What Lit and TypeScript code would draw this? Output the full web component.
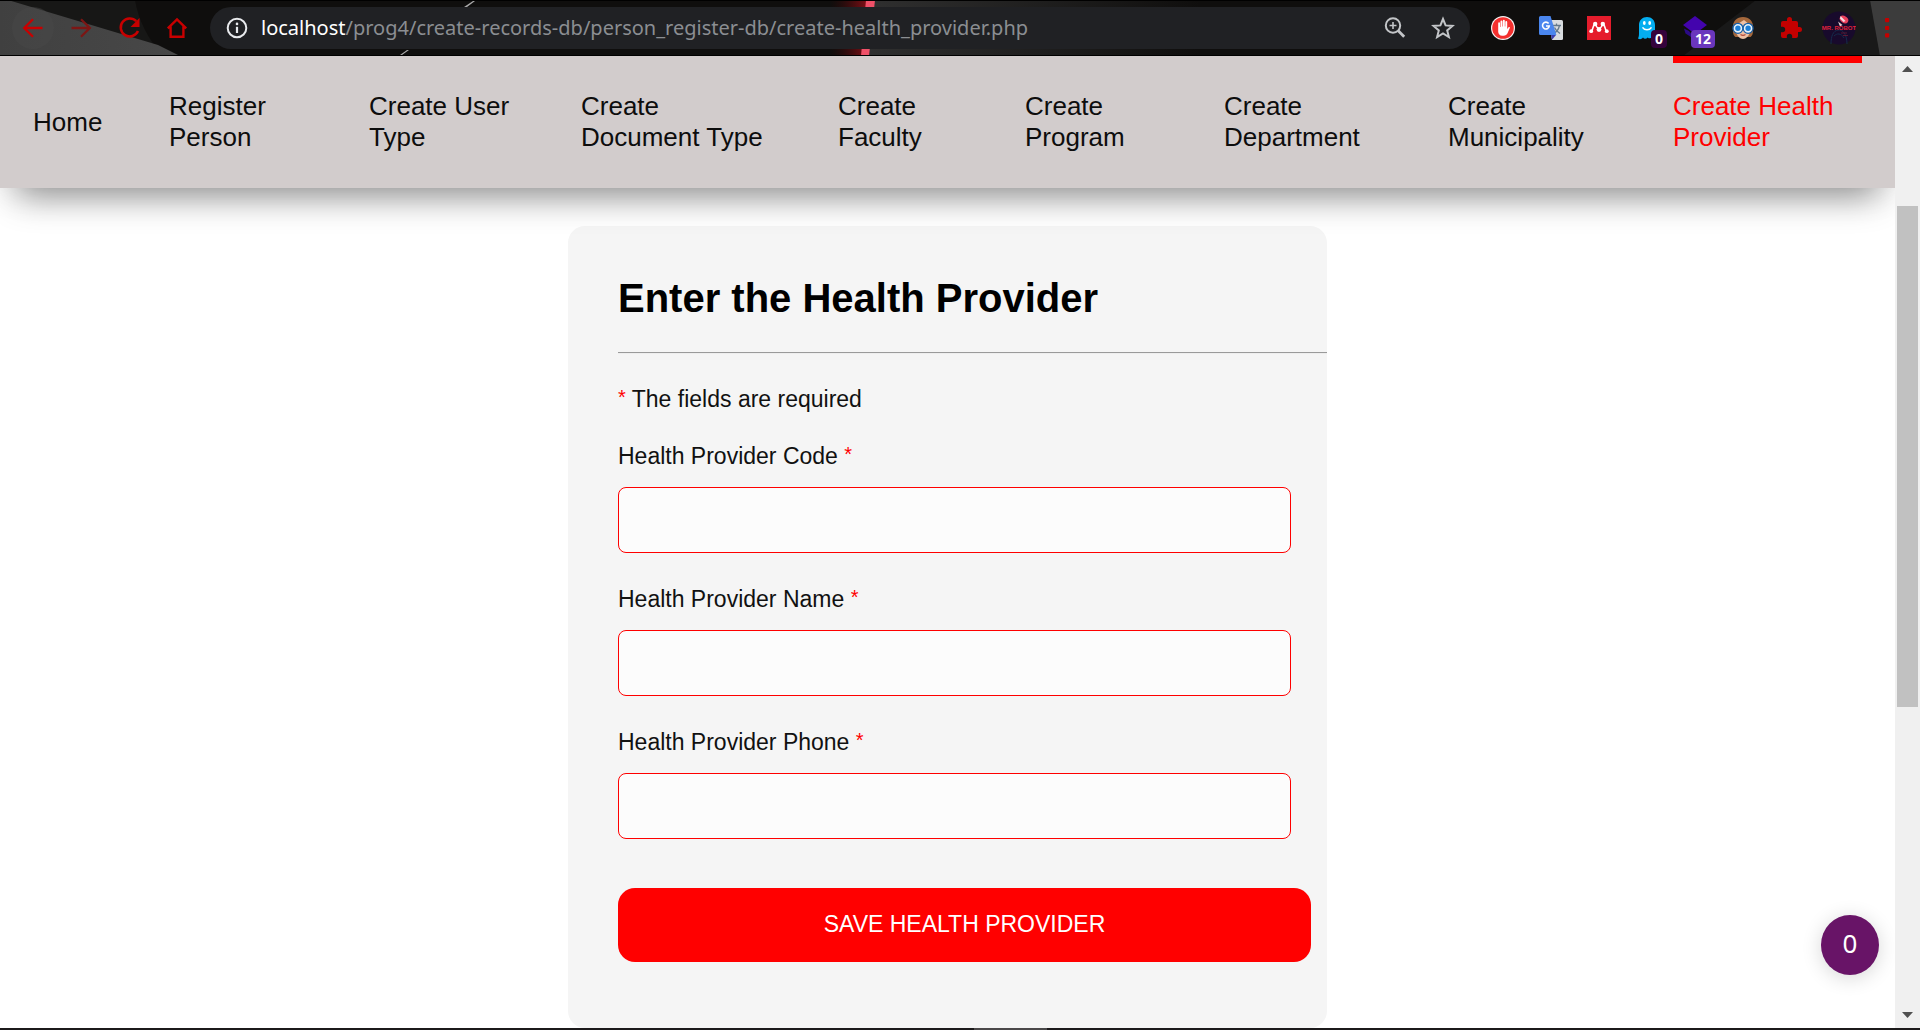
import { LitElement, html, css, svg } from "lit";
import { customElement } from "lit/decorators.js";

const backIcon = html`<svg class="icon" viewBox="0 0 24 24" aria-hidden="true"><path d="M21.5 12H3.5M12 3.2L3.2 12l8.800 8.800" fill="none" stroke="currentColor" stroke-width="2.300"/></svg>`;
const forwardIcon = html`<svg class="icon" viewBox="0 0 24 24" aria-hidden="true"><path d="M2.500 12h18M12 3.200l8.800 8.800-8.800 8.800" fill="none" stroke="currentColor" stroke-width="2.300"/></svg>`;
const reloadIcon = html`<svg class="icon" viewBox="0 0 24 24" aria-hidden="true"><path d="M19.300 5.200A9 9 0 1 0 21 15" fill="none" stroke="currentColor" stroke-width="2.500"/><path d="M22.500 2v9h-9z" fill="currentColor"/></svg>`;
const homeIcon = html`<svg class="icon" viewBox="0 0 24 24" aria-hidden="true"><path d="M2.800 12.300L12 3.400l9.200 8.900M5.600 10.500v10.300h12.800V10.500" fill="none" stroke="currentColor" stroke-width="2.400"/></svg>`;
const infoIcon = html`<svg class="icon" viewBox="0 0 24 24" aria-hidden="true"><circle cx="12" cy="12" r="9.300" fill="none" stroke="currentColor" stroke-width="2"/><path d="M12 10.800v6.200" stroke="currentColor" stroke-width="2.200"/><circle cx="12" cy="7.900" r="1.300" fill="currentColor"/></svg>`;
const zoomIcon = html`<svg class="icon" viewBox="0 0 24 24" aria-hidden="true"><circle cx="10" cy="9.500" r="7.200" fill="none" stroke="currentColor" stroke-width="2"/><path d="M6.500 9.500h7M10 6v7" stroke="currentColor" stroke-width="1.600"/><path d="M15 14.500l6.200 6.200" stroke="currentColor" stroke-width="2.800"/></svg>`;
const starIcon = html`<svg class="icon" viewBox="0 0 24 24" aria-hidden="true"><path d="M12 3l2.600 6.400 6.900.500-5.300 4.500 1.700 6.700L12 17.400l-5.900 3.700 1.700-6.700-5.300-4.500 6.900-.500z" fill="none" stroke="currentColor" stroke-width="2"/></svg>`;

const handIcon = html`<svg class="icon" viewBox="0 0 24 24" aria-hidden="true"><circle cx="12" cy="12" r="12" fill="#f5f1f1"/><circle cx="12" cy="12" r="10.800" fill="#f4302e"/><path d="M7.200 11.500V7.200a.9.900 0 0 1 1.800 0V11h.500V5.400a.95.950 0 0 1 1.900 0V10.500h.500V4.700a.95.950 0 0 1 1.900 0v5.800h.500V5.900a.95.950 0 0 1 1.900 0v7.300l1-1.700c.7-1 2.100-.6 1.600.6l-2.300 5.200c-.7 1.600-2 2.500-3.800 2.500h-1.500c-2.400 0-4-1.700-4-4z" fill="#fff"/></svg>`;
const translateIcon = html`<svg class="icon" viewBox="0 0 24 24" aria-hidden="true">
  <path d="M9 4h13.500A1.500 1.500 0 0 1 24 5.500v17a1.500 1.500 0 0 1-1.500 1.500H13z" fill="#d9dcdf"/>
  <path d="M13.500 9.500h8.500M17.500 7.500v2M20.500 9.500c-.8 3.500-3 6.500-6 8M15.500 11.500c1 2.500 3 4.500 5.500 6" fill="none" stroke="#64798a" stroke-width="1.300"/>
  <path d="M12 19h5l-4 4.800z" fill="#3b3fae"/>
  <path d="M1.500 0h10L17.400 19H1.500A1.500 1.500 0 0 1 0 17.500v-16A1.500 1.500 0 0 1 1.500 0z" fill="#4a86ee"/>
  <path d="M9.600 7.400A3.400 3.400 0 1 0 10.300 10H7" fill="none" stroke="#fff" stroke-width="1.600"/></svg>`;
const networkIcon = html`<svg class="icon" viewBox="0 0 24 24" aria-hidden="true"><path d="M0 0h24v24H0z" fill="#e51c2c"/><path d="M4.500 15c1.800-1.500.6-4.500 3.300-6.500M8.500 8c1 3.200 1.500 4 3.500 4s2.500-.8 3.500-4M19.500 15c-1.800-1.500-.6-4.500-3.300-6.500" fill="none" stroke="#fff" stroke-width="1.600"/><circle cx="8.200" cy="8" r="2.200" fill="#fff"/><circle cx="15.800" cy="8" r="2.200" fill="#fff"/><circle cx="4.200" cy="15.200" r="1.900" fill="#fff"/><circle cx="19.800" cy="15.200" r="1.900" fill="#fff"/><circle cx="12" cy="13.600" r="2.400" fill="#fff"/></svg>`;
const ghostIcon = html`<svg class="icon" viewBox="0 0 24 24" aria-hidden="true"><path d="M4 9c0-5 3.500-8 8-8s8 3 8 8v8c0 2 .6 3.500 1 5-2 .8-3-.3-3.800-.8-1.500 1.500-3.200 1.500-4.500.2-1.500 1.800-3.500 1.800-4.700.2C6.500 23.500 4.500 23.500 3 22.500c1-2 1-4 1-6z" fill="#04aef0"/><ellipse cx="9.300" cy="7" rx="1.400" ry="2" fill="#fff"/><ellipse cx="14.700" cy="7" rx="1.400" ry="2" fill="#fff"/><path d="M7.500 11.300c2 3.300 7 3.300 9 0" fill="none" stroke="#fff" stroke-width="1.500"/></svg>`;
const capIcon = html`<svg class="icon" viewBox="0 0 24 24" aria-hidden="true"><path d="M1 12.500l5 2.500 4 5-2 1-5.500-3.500z" fill="#2b0a86"/><path d="M12 0l12 9-12 9L0 9z" fill="#4304ad"/></svg>`;
const faceIcon = html`<svg class="icon" viewBox="0 0 24 24" aria-hidden="true"><path d="M2 13C1 5 6 1 12 1s11 4 10 12c0 4 0 6-2.500 8H4.500C2 19 2 17 2 13z" fill="#a5683c"/><path d="M5 9l8-5 6 5v7c-1 4-4 7-7 7s-6-3-7-7z" fill="#eec0a4"/><path d="M9.500 18.500c1.500 1 3.500 1 5 0" stroke="#b34a3c" stroke-width="1.200" fill="none"/><circle cx="6.900" cy="12.300" r="3.600" fill="#1b7fd9" stroke="#e6f2fb" stroke-width="1.800"/><circle cx="17.100" cy="12.300" r="3.600" fill="#1b7fd9" stroke="#e6f2fb" stroke-width="1.800"/><circle cx="6.900" cy="12.300" r="5" fill="none" stroke="#1461ad" stroke-width="1.200"/><circle cx="17.100" cy="12.300" r="5" fill="none" stroke="#1461ad" stroke-width="1.200"/></svg>`;
const puzzleIcon = html`<svg class="icon" viewBox="0 0 24 24" aria-hidden="true"><path d="M20.500 11H19V7a2 2 0 0 0-2-2h-4V3.500a2.500 2.500 0 0 0-5 0V5H4a2 2 0 0 0-2 2v3.800h1.500a2.700 2.700 0 0 1 0 5.400H2V20a2 2 0 0 0 2 2h3.800v-1.500a2.700 2.700 0 0 1 5.400 0V22H17a2 2 0 0 0 2-2v-4h1.500a2.500 2.500 0 0 0 0-5z" fill="#c40000"/></svg>`;
const avatarIcon = html`<svg class="avatar" viewBox="0 0 34 34" aria-hidden="true"><circle cx="17" cy="17" r="16.500" fill="#180a2c"/><path d="M9 33c0-8 2-13 7-14s9 5 9 14M12 25c3-3 7-3 10 2" fill="none" stroke="#152c4c" stroke-width="1"/><ellipse cx="22" cy="8.500" rx="4.600" ry="3.400" fill="#e9415c" transform="rotate(35 22 8.500)"/><path d="M18.500 5l5 5-2 1-3.500-3.500z" fill="#f3dfe4"/><path d="M16 10.500l4.500 3.500-2.500 1.500z" fill="#e8c9ce"/><text x="17" y="19" text-anchor="middle" class="avatar-text">MR. ROBOT</text><path d="M19 22h6M21 24.500h5" stroke="#6d1a34" stroke-width=".8"/></svg>`;
const menuIcon = html`<svg class="icon" viewBox="0 0 24 24" aria-hidden="true"><g fill="#c40000"><rect x="10" y="2" width="4.200" height="4.200" rx="1"/><rect x="10" y="9.900" width="4.200" height="4.200" rx="1"/><rect x="10" y="17.200" width="4.200" height="4.200" rx="1"/></g></svg>`;

const artwork = svg`
  <defs>
    <linearGradient id="glow"><stop offset="0" stop-color="#3a0606" stop-opacity="0"/><stop offset="1" stop-color="#7c0e15"/></linearGradient>
    <linearGradient id="fade"><stop offset="0" stop-color="#303030"/><stop offset="1" stop-color="#303030" stop-opacity="0"/></linearGradient>
    <linearGradient id="left"><stop offset="0" stop-color="#404040"/><stop offset="1" stop-color="#484848"/></linearGradient>
  </defs>
  <rect width="1920" height="56" fill="#0f0e0d"/>
  <path d="M15 0h120q5 30 28 56H0V0z" fill="#171716"/>
  <path d="M0 0h8L158 45l22 11H0z" fill="url(#left)"/>
  <path d="M473 1h2l-8 6h-3zM407 50h2l-7 5h-2z" fill="#a8a8a8"/>
  <rect x="830" width="36" height="56" fill="url(#glow)"/>
  <path d="M870 0h330v56H863z" fill="url(#fade)"/>
  <path d="M866 0h9l-6 56h-8z" fill="#ef5068"/>
  <path d="M1756 0h116l10 56h-199z" fill="#191919"/>
  <path d="M1870 0h50v56h-40z" fill="#3c3c3c"/>
  <circle cx="33" cy="28" r="21" fill="#4a4a4a" fill-opacity=".45"/>
  <rect width="1920" height="1" fill="#000"/>
  <rect y="55" width="1920" height="1" fill="#000"/>`;

@customElement("browser-bar")
export class BrowserBar extends LitElement {
  static styles = css`
    :host { display: block; }
    .bar { position: relative; display: flex; align-items: center; gap: 9px; height: 56px; padding: 0 9px; box-sizing: border-box; }
    .art { position: absolute; inset: 0; width: 100%; height: 100%; }
    .group { position: relative; display: flex; }
    .tool { position: relative; display: flex; align-items: center; justify-content: center; width: 48px; height: 42px; padding: 0; border: 0; background: none; color: #c80000; }
    .dim { color: #7c1614; }
    .icon { width: 24px; height: 24px; display: block; }
    .avatar { width: 34px; height: 34px; display: block; }
    .avatar-text { font: bold 6px "Liberation Sans", sans-serif; fill: #e0233c; }
    .address { position: relative; display: flex; align-items: center; flex: 1; height: 42px; border-radius: 21px; background: #202124; padding: 0 3px; min-width: 0; }
    .address .tool { color: #c3c5c8; }
    .address .site { color: #e8eaed; }
    .url { flex: 1; font: 20px/28px "Noto Sans", sans-serif; color: #8b8e92; white-space: nowrap; overflow: hidden; }
    .host { color: #fff; }
    .badge { position: absolute; right: 4px; bottom: 1px; padding: 0 4px; border-radius: 4px; background: #35033c; color: #fff; font: bold 14px/18px "Open Sans", sans-serif; }
    .violet { background: #6a36bd; }
  `;

  render() {
    return html`
      <div class="bar">
        <svg class="art" viewBox="0 0 1920 56" preserveAspectRatio="none" aria-hidden="true">${artwork}</svg>
        <div class="group">
          <button class="tool" aria-label="Back">${backIcon}</button>
          <button class="tool dim" aria-label="Forward">${forwardIcon}</button>
          <button class="tool" aria-label="Reload">${reloadIcon}</button>
          <button class="tool" aria-label="Home page">${homeIcon}</button>
        </div>
        <div class="address">
          <button class="tool site" aria-label="Site information">${infoIcon}</button>
          <span class="url"><span class="host">localhost</span>/prog4/create-records-db/person_register-db/create-health_provider.php</span>
          <button class="tool" aria-label="Zoom">${zoomIcon}</button>
          <button class="tool" aria-label="Bookmark">${starIcon}</button>
        </div>
        <div class="group">
          <button class="tool" aria-label="Ad blocker">${handIcon}</button>
          <button class="tool" aria-label="Translate">${translateIcon}</button>
          <button class="tool" aria-label="References">${networkIcon}</button>
          <button class="tool" aria-label="Trackers">${ghostIcon}<span class="badge">0</span></button>
          <button class="tool" aria-label="Courses">${capIcon}<span class="badge violet">12</span></button>
          <button class="tool" aria-label="Reader">${faceIcon}</button>
          <button class="tool" aria-label="Extensions">${puzzleIcon}</button>
          <button class="tool" aria-label="Profile">${avatarIcon}</button>
          <button class="tool" aria-label="Menu">${menuIcon}</button>
        </div>
      </div>
    `;
  }
}

@customElement("site-nav")
export class SiteNav extends LitElement {
  static styles = css`
    :host { display: block; position: relative; z-index: 1; }
    .nav { background: #d2cccc; padding: 0 33px; box-shadow: 0 26px 34px -18px rgba(0, 0, 0, 0.42), 0 5px 33px rgba(0, 0, 0, 0.08); }
    .list { display: grid; grid-template-columns: 136fr 200fr 212fr 257fr 187fr 199fr 224fr 225fr 189fr; margin: 0; padding: 0; list-style: none; }
    .item { display: flex; padding-right: 66px; }
    .item:last-child { padding-right: 0; }
    .link { flex: 1; display: flex; align-items: center; min-height: 118px; border-top: 7px solid transparent; border-bottom: 7px solid transparent; color: #0d0d0d; font: 26px/31px "Liberation Sans", Arial, sans-serif; text-decoration: none; }
    .active { color: #f00; border-top-color: #f00; }
  `;

  private items = [
    "Home",
    "Register Person",
    "Create User Type",
    "Create Document Type",
    "Create Faculty",
    "Create Program",
    "Create Department",
    "Create Municipality",
    "Create Health Provider",
  ];

  render() {
    const last = this.items.length - 1;
    return html`
      <nav class="nav">
        <ul class="list">
          ${this.items.map(
            (item, i) => html`<li class="item"><a class=${i === last ? "link active" : "link"} href="#">${item}</a></li>`
          )}
        </ul>
      </nav>
    `;
  }
}

@customElement("provider-form")
export class ProviderForm extends LitElement {
  static styles = css`
    :host { display: block; width: calc(40% + 1px); min-width: 480px; margin: 38px auto 0; }
    .card { display: block; box-sizing: border-box; padding: 49px 0 66px 50px; border-radius: 17px; background: #f5f5f5; font: 23px/26px "Liberation Sans", Arial, sans-serif; color: #111; }
    .title { margin: 0; font-size: 40px; line-height: 46px; color: #000; }
    .rule { height: 1px; margin: 31px 0 32px; border: 0; border-top: 1px solid #9a9a9a; background: #eee; }
    .note { margin: 0 0 31px; }
    .star { color: #f00; font-size: 20px; line-height: 20px; vertical-align: 3px; }
    .field { display: flex; flex-direction: column; gap: 18px; margin: 0 36px 33px 0; }
    .input { height: 66px; box-sizing: border-box; padding: 0 16px; border: 1px solid #f00; border-radius: 8px; background: #fcfcfc; font: inherit; outline: 0; }
    .actions { display: flex; padding: 16px 16px 0 0; }
    .save { flex: 1; height: 74px; padding: 0 0 2px; border: 0; border-radius: 17px; background: #f00; color: #fff; font: inherit; }
  `;

  private fields = [
    { id: "code", label: "Health Provider Code", type: "text" },
    { id: "name", label: "Health Provider Name", type: "text" },
    { id: "phone", label: "Health Provider Phone", type: "tel" },
  ];

  render() {
    return html`
      <form class="card">
        <h1 class="title">Enter the Health Provider</h1>
        <hr class="rule" />
        <p class="note"><span class="star">*</span> The fields are required</p>
        ${this.fields.map(
          (f) => html`
            <div class="field">
              <label for=${f.id}>${f.label} <span class="star">*</span></label>
              <input class="input" id=${f.id} name=${f.id} type=${f.type} required />
            </div>
          `
        )}
        <div class="actions"><button class="save" type="button">SAVE HEALTH PROVIDER</button></div>
      </form>
    `;
  }
}

@customElement("app-root")
export class AppRoot extends LitElement {
  static styles = css`
    :host { display: flex; flex-direction: column; height: 100vh; overflow: hidden; background: #fff; }
    .view { flex: 1; display: flex; min-height: 0; }
    .page { position: relative; flex: 1; min-width: 0; overflow: hidden; }
    .count { position: absolute; z-index: 2; right: 16px; bottom: 53px; width: 58px; height: 60px; padding: 0 0 4px; border: 0; border-radius: 50%; background: #681467; color: #fff; font: 26px/32px "Noto Sans", sans-serif; box-shadow: 0 3px 20px rgba(0, 0, 0, 0.16); }
    .scroll { display: flex; flex-direction: column; align-items: center; width: 25px; background: #f0f0f0; }
    .arrow { display: block; width: 11px; height: 6px; margin: 10px 0; fill: #505050; }
    .before { flex: 124; }
    .thumb { flex: 501; width: 21px; background: #c1c1c1; }
    .after { flex: 295; }
    .edge { display: flex; justify-content: center; flex: none; height: 2px; padding-left: 100px; background: #1c1a1b; }
    .handle { width: 73px; background: #4a4849; }
  `;

  render() {
    return html`
      <browser-bar></browser-bar>
      <div class="view">
        <main class="page">
          <site-nav></site-nav>
          <provider-form></provider-form>
          <button class="count" aria-label="Trackers found: 0">0</button>
        </main>
        <div class="scroll" aria-hidden="true">
          <svg class="arrow" viewBox="0 0 11 6"><path d="M0 6L5.500 0 11 6z"/></svg>
          <div class="before"></div>
          <div class="thumb"></div>
          <div class="after"></div>
          <svg class="arrow" viewBox="0 0 11 6"><path d="M0 0h11L5.500 6z"/></svg>
        </div>
      </div>
      <div class="edge" aria-hidden="true"><div class="handle"></div></div>
    `;
  }
}
